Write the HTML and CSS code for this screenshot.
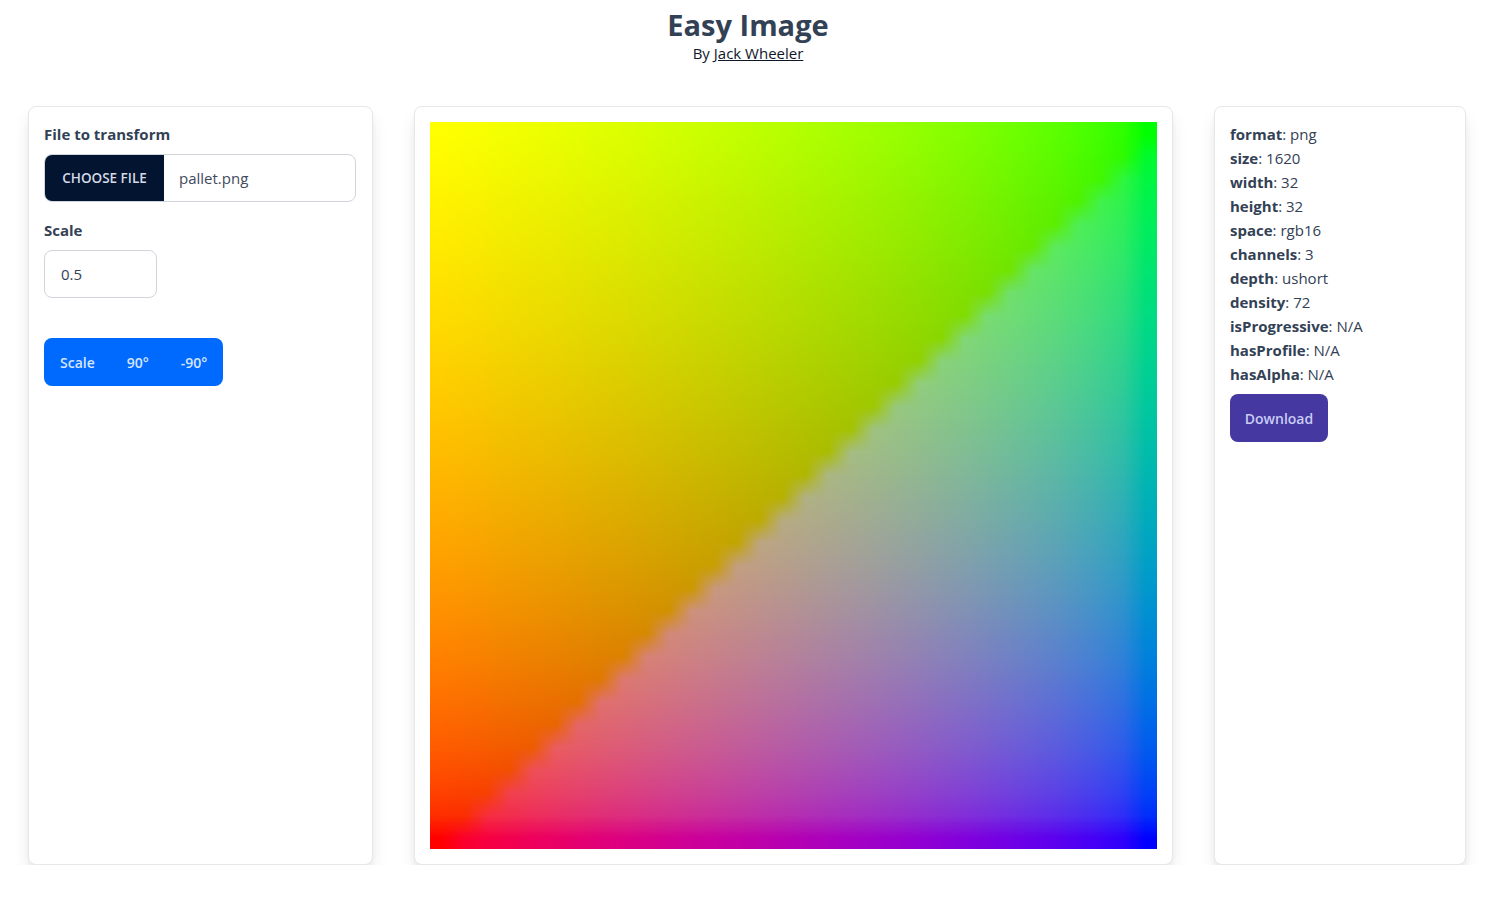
FILE: index.html
```html
<!DOCTYPE html>
<html lang="en">
<head>
<meta charset="utf-8">
<title>Easy Image</title>
<link rel="stylesheet" href="styles.css">
</head>
<body>
<div class="page">
  <header class="header">
    <h1 class="title">Easy Image</h1>
    <p class="byline">By <a class="author" href="#">Jack Wheeler</a></p>
  </header>
  <main class="layout">
    <section class="card controls">
      <label class="field-label">File to transform</label>
      <div class="file-input">
        <span class="file-btn">Choose File</span>
        <span class="file-name">pallet.png</span>
      </div>
      <label class="field-label scale-label">Scale</label>
      <input class="num-input" type="text" value="0.5">
      <div class="btn-group">
        <button class="group-btn" type="button">Scale</button>
        <button class="group-btn" type="button">90°</button>
        <button class="group-btn" type="button">-90°</button>
      </div>
    </section>
    <section class="card preview">
      <canvas id="preview" class="preview-canvas" width="727" height="727"></canvas>
    </section>
    <section class="card info">
      <ul class="meta">
        <li><b>format</b>: png</li>
        <li><b>size</b>: 1620</li>
        <li><b>width</b>: 32</li>
        <li><b>height</b>: 32</li>
        <li><b>space</b>: rgb16</li>
        <li><b>channels</b>: 3</li>
        <li><b>depth</b>: ushort</li>
        <li><b>density</b>: 72</li>
        <li><b>isProgressive</b>: N/A</li>
        <li><b>hasProfile</b>: N/A</li>
        <li><b>hasAlpha</b>: N/A</li>
      </ul>
      <button class="download" type="button">Download</button>
    </section>
  </main>
</div>
<script src="script.js"></script>
</body>
</html>
```

FILE: styles.css
```css
* { box-sizing: border-box; }

body {
  margin: 0;
  background: #ffffff;
  color: #334155;
  font-family: "Open Sans", "Noto Sans", sans-serif;
}

.page {
  width: 1496px;
}

.header {
  text-align: center;
  padding-top: 7px;
}

.title {
  margin: 0;
  font-size: 29px;
  line-height: 36px;
  font-weight: 700;
  color: #334155;
}

.byline {
  margin: 0;
  font-size: 15px;
  line-height: 20px;
  color: #0f172a;
}

.author {
  color: #0f172a;
  text-decoration: underline;
}

.layout {
  display: flex;
  align-items: stretch;
  gap: 41px;
  padding: 0 28px;
  margin-top: 43px;
}

.card {
  background: #ffffff;
  border: 1px solid #e5e7eb;
  border-radius: 8px;
  padding: 15px;
  box-shadow: 0 10px 18px -3px rgba(0, 0, 0, 0.12), 0 4px 6px -2px rgba(0, 0, 0, 0.06);
}

.controls {
  width: 345px;
  display: flex;
  flex-direction: column;
  align-items: flex-start;
}

.preview {
  width: 759px;
}

.preview-canvas {
  display: block;
  width: 727px;
  height: 727px;
}

.info {
  width: 252px;
}

.field-label {
  display: block;
  font-size: 15px;
  line-height: 24px;
  font-weight: 700;
  color: #334155;
}

.file-input {
  margin-top: 8px;
  width: 312px;
  height: 48px;
  display: flex;
  align-items: center;
  border: 1px solid #d1d5db;
  border-radius: 8px;
  overflow: hidden;
}

.file-btn {
  height: 100%;
  width: 119px;
  display: flex;
  align-items: center;
  justify-content: center;
  background: #031431;
  color: #d5dbe6;
  font-size: 13.5px;
  font-weight: 600;
  text-transform: uppercase;
}

.file-name {
  padding-left: 15px;
  font-size: 15px;
  color: #3f4a5c;
}

.scale-label {
  margin-top: 16px;
}

.num-input {
  margin-top: 8px;
  width: 113px;
  height: 48px;
  border: 1px solid #d1d5db;
  border-radius: 8px;
  padding: 0 16px;
  font-family: inherit;
  font-size: 15px;
  color: #334155;
  background: #ffffff;
  outline: none;
}

.btn-group {
  margin-top: 40px;
  display: flex;
  height: 48px;
  background: #006aff;
  border-radius: 8px;
  overflow: hidden;
}

.group-btn {
  border: 0;
  background: transparent;
  color: #d6e5ff;
  font-family: inherit;
  font-size: 14px;
  font-weight: 600;
  padding: 0 16px;
  height: 48px;
  cursor: pointer;
}

.meta {
  list-style: none;
  margin: 0;
  padding: 0;
  font-size: 15px;
  line-height: 24px;
  color: #334155;
}

.meta b {
  font-weight: 700;
}

.download {
  margin-top: 8px;
  width: 98px;
  height: 48px;
  border: 0;
  border-radius: 8px;
  background: #4538a0;
  color: #c9ccf5;
  font-family: inherit;
  font-size: 14px;
  font-weight: 600;
  cursor: pointer;
}
```

FILE: script.js
```js
(function () {
  var N = 32;
  var src = document.createElement('canvas');
  src.width = N;
  src.height = N;
  var sctx = src.getContext('2d');
  var data = sctx.createImageData(N, N);
  for (var j = 0; j < N; j++) {
    for (var i = 0; i < N; i++) {
      var u = i / (N - 1);
      var v = j / (N - 1);
      var r = Math.round(255 * Math.sqrt(1 - u));
      var g = Math.round(255 * Math.sqrt(1 - v));
      var b = (i + j > N - 1) ? Math.round(255 * Math.sqrt(u * v)) : 0;
      var k = (j * N + i) * 4;
      data.data[k] = r;
      data.data[k + 1] = g;
      data.data[k + 2] = b;
      data.data[k + 3] = 255;
    }
  }
  sctx.putImageData(data, 0, 0);
  var out = document.getElementById('preview');
  var ctx = out.getContext('2d');
  ctx.imageSmoothingEnabled = true;
  ctx.drawImage(src, 0, 0, out.width, out.height);
})();
```
